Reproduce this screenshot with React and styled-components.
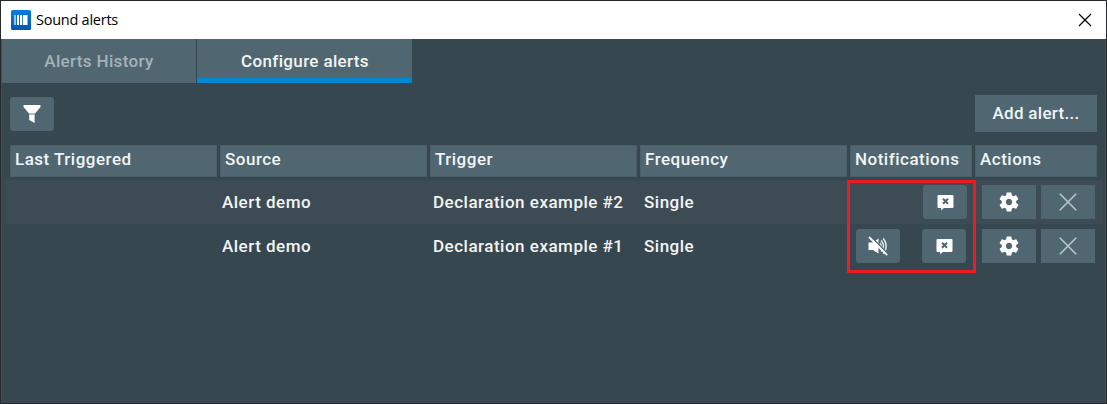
import React from 'react';
import styled, { createGlobalStyle } from 'styled-components';

const GlobalStyle = createGlobalStyle`
  * { box-sizing: border-box; }
  body { margin: 0; background: #25292d; }
`;

const Window = styled.div`
  width: 1107px;
  height: 404px;
  padding: 1px 1px 1px;
  background: #25292d;
  font: 500 17px/20px Roboto, sans-serif;
  letter-spacing: 0.5px;
  color: #f2f5f6;
  overflow: hidden;
`;

const TitleBar = styled.header`
  height: 38px;
  padding: 0 14px 0 10px;
  display: flex;
  align-items: center;
  background: #fff;
`;

const Title = styled.h1`
  flex: 1;
  margin: 0 0 0 5px;
  font: 400 14.5px/20px "Open Sans", sans-serif;
  letter-spacing: -0.25px;
  color: #000;
`;

const Content = styled.main`
  position: relative;
  height: 364px;
  background: #37474f;
  border-left: 1px solid #42525a;
  border-right: 1px solid #42525a;
`;

const Tabs = styled.nav`
  display: flex;
  gap: 1px;
  height: 44px;
`;

const Tab = styled.button`
  width: ${(p) => (p.$active ? 215 : 194)}px;
  padding: ${(p) => (p.$active ? '4px 0 0 1px' : '0 0 1px')};
  border: 0;
  border-bottom: ${(p) => (p.$active ? '5px solid #0288d1' : '0')};
  background: #506670;
  font: inherit;
  letter-spacing: 0.35px;
  color: ${(p) => (p.$active ? '#f2f5f6' : '#a5b2b8')};
`;

const Toolbar = styled.div`
  display: flex;
  justify-content: space-between;
  align-items: center;
  margin-top: 12px;
  padding: 0 8px;
  height: 37px;
`;

const Button = styled.button`
  display: flex;
  align-items: center;
  justify-content: center;
  width: ${(p) => p.$width || 44}px;
  height: ${(p) => p.$height || 34}px;
  padding: 0;
  border: 0;
  border-radius: ${(p) => (p.$square ? 0 : 3)}px;
  background: #506670;
  color: #fff;
  font: inherit;
  letter-spacing: inherit;
`;

const AddButton = styled(Button)`
  padding-bottom: 2px;
  letter-spacing: 0.3px;
  color: #f2f5f6;
`;

const columns = '207px 207px 207px 207px 122px 122px';

const HeaderRow = styled.div`
  display: grid;
  grid-template-columns: ${columns};
  column-gap: 3px;
  margin: 13px 0 3px;
  padding-left: 8px;
`;

const HeaderCell = styled.div`
  height: 32px;
  padding: 3px 0 0 4px;
  background: #506670;
  border: 1px solid #4a5f69;
  white-space: nowrap;
`;

const Row = styled.div`
  display: grid;
  grid-template-columns: ${columns};
  column-gap: 3px;
  align-items: center;
  height: 44px;
  margin: 0 2px;
  padding-left: 6px;
  background: ${(p) => (p.$shaded ? '#3d4c54' : 'transparent')};
`;

const Cell = styled.div`
  padding-left: ${(p) => p.$inset || 0}px;
  white-space: nowrap;
`;

const Notifications = styled.div`
  display: flex;
  justify-content: space-between;
  padding: 0 ${(p) => p.$end}px 0 6px;
`;

const Slot = styled.div`
  width: 44px;
`;

const Actions = styled.div`
  display: flex;
  gap: 5px;
  padding-left: 7px;
`;

const Highlight = styled.div`
  position: absolute;
  left: 845px;
  top: 141px;
  width: 129px;
  height: 93px;
  border: 3px solid #ed1c24;
  pointer-events: none;
`;

const AppIcon = () => (
  <svg width="20" height="20" viewBox="0 0 20 20">
    <defs>
      <linearGradient id="appBlue" x1="0" y1="0" x2="0" y2="1">
        <stop offset="0" stopColor="#0a7fe0" />
        <stop offset="1" stopColor="#0055b0" />
      </linearGradient>
    </defs>
    <rect width="20" height="20" rx="1.5" fill="url(#appBlue)" />
    <path d="M3.4 5h1.2v10H3.4zM6 5h2v10H6zM9 5h2.2v10H9zM12 5h4.5v10H12z" fill="#fff" />
  </svg>
);

const CloseIcon = () => (
  <svg width="14" height="14" viewBox="0 0 14 14">
    <path d="M1 1l12 12M13 1L1 13" stroke="#000" strokeWidth="1.2" />
  </svg>
);

const FilterIcon = () => (
  <svg width="18" height="18" viewBox="0 0 18 18">
    <path d="M.5 0h17v2L12 8.6H6L.5 2zM6.2 9.5h5.4V18L6.2 15z" fill="#fff" />
    <path d="M6 8.3h6v1.2H6z" fill="#b5c0c5" />
  </svg>
);

const MessageIcon = () => (
  <svg width="17" height="17" viewBox="0 0 17 17">
    <path d="M1.5 1h14q1 0 1 1v11q0 1-1 1H6.8L4.2 16.5V14H1.5q-1 0-1-1V2q0-1 1-1z" fill="#fff" />
    <path d="M6 4.8l5 5M11 4.8l-5 5" stroke="#506670" strokeWidth="2" />
  </svg>
);

const MutedIcon = () => (
  <svg width="20" height="20" viewBox="0 0 20 20">
    <path d="M.5 6.5h4.5l5.5-4v15L5 14H.5z" fill="#fff" />
    <path d="M12 7q2 3 0 6M13.2 4.5q4.5 5.5 0 11M15.2 2.2q6 7.8 0 15.6" fill="none" stroke="#e6eaec" strokeWidth="1.5" />
    <path d="M2.8.4l17 17.6" stroke="#506670" strokeWidth="1.6" />
    <path d="M1 1l18.2 18.2" stroke="#fff" strokeWidth="1.8" />
  </svg>
);

const GearIcon = () => (
  <svg width="24" height="24" viewBox="0 0 24 24" fill="#fff">
    <path d="M19.14 12.94c.04-.3.06-.61.06-.94 0-.32-.02-.64-.07-.94l2.03-1.58c.18-.14.23-.41.12-.61l-1.92-3.32c-.12-.22-.37-.29-.59-.22l-2.39.96c-.5-.38-1.03-.7-1.62-.94l-.36-2.54c-.04-.24-.24-.41-.48-.41h-3.84c-.24 0-.43.17-.47.41l-.36 2.54c-.59.24-1.13.57-1.62.94l-2.39-.96c-.22-.08-.47 0-.59.22L2.74 8.87c-.12.21-.08.47.12.61l2.03 1.58c-.05.3-.09.63-.09.94s.02.64.07.94l-2.03 1.58c-.18.14-.23.41-.12.61l1.92 3.32c.12.22.37.29.59.22l2.39-.96c.5.38 1.03.7 1.62.94l.36 2.54c.05.24.24.41.48.41h3.84c.24 0 .44-.17.47-.41l.36-2.54c.59-.24 1.13-.56 1.62-.94l2.39.96c.22.08.47 0 .59-.22l1.92-3.32c.12-.22.07-.47-.12-.61l-2.01-1.58zM12 15.2c-1.77 0-3.2-1.43-3.2-3.2s1.43-3.2 3.2-3.2 3.2 1.43 3.2 3.2-1.43 3.2-3.2 3.2z" />
  </svg>
);

const RemoveIcon = () => (
  <svg width="18" height="18" viewBox="0 0 18 18">
    <path d="M.8.8l16.4 16.4M17.2.8L.8 17.2" stroke="#bcc6ca" strokeWidth="1.6" />
  </svg>
);

const headings = ['Last Triggered', 'Source', 'Trigger', 'Frequency', 'Notifications', 'Actions'];

const alerts = [
  { source: 'Alert demo', trigger: 'Declaration example #2', frequency: 'Single', muted: false },
  { source: 'Alert demo', trigger: 'Declaration example #1', frequency: 'Single', muted: true },
];

export default function App() {
  return (
    <>
      <GlobalStyle />
      <Window>
        <TitleBar>
          <AppIcon />
          <Title>Sound alerts</Title>
          <CloseIcon />
        </TitleBar>
        <Content>
          <Tabs>
            <Tab>Alerts History</Tab>
            <Tab $active>Configure alerts</Tab>
          </Tabs>
          <Toolbar>
            <Button aria-label="Filter"><FilterIcon /></Button>
            <AddButton $width={122} $height={37} $square>Add alert...</AddButton>
          </Toolbar>
          <HeaderRow>
            {headings.map((h) => <HeaderCell key={h}>{h}</HeaderCell>)}
          </HeaderRow>
          {alerts.map((a, i) => (
            <Row key={a.trigger} $shaded={i === 0}>
              <Cell />
              <Cell $inset={2}>{a.source}</Cell>
              <Cell $inset={3}>{a.trigger}</Cell>
              <Cell $inset={4}>{a.frequency}</Cell>
              <Notifications $end={a.muted ? 6 : 5}>
                <Slot>{a.muted && <Button aria-label="Sound off"><MutedIcon /></Button>}</Slot>
                <Button aria-label="Popup off"><MessageIcon /></Button>
              </Notifications>
              <Actions>
                <Button $width={54} $square aria-label="Settings"><GearIcon /></Button>
                <Button $width={54} $square aria-label="Remove"><RemoveIcon /></Button>
              </Actions>
            </Row>
          ))}
          <Highlight />
        </Content>
      </Window>
    </>
  );
}
